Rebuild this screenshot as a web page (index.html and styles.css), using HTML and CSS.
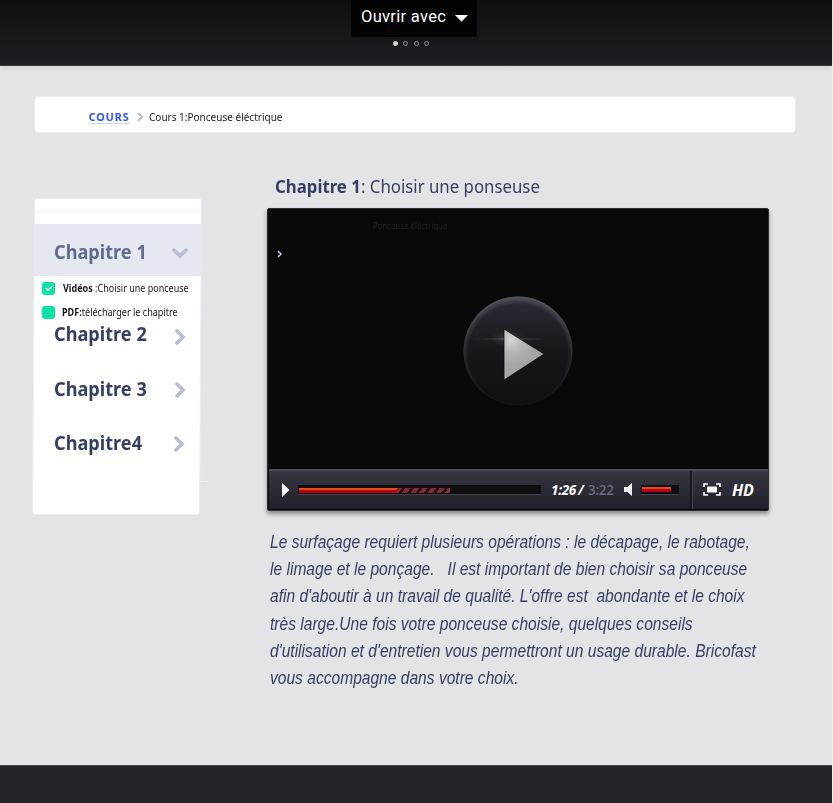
FILE: index.html
```html
<!DOCTYPE html>
<html lang="fr">
<head>
<meta charset="utf-8">
<title>Cours 1 : Ponceuse éléctrique</title>
<link rel="stylesheet" href="styles.css">
</head>
<body>
<div class="page">
  <header class="topbar">
    <button class="open-with"><span>Ouvrir avec</span><svg width="13" height="7" viewBox="0 0 13 7"><path d="M0 0h13L6.5 6.7z" fill="#fff"/></svg></button>
    <div class="dots"><i class="on"></i><i></i><i></i><i></i></div>
  </header>

  <nav class="breadcrumb">
    <a class="crumb-link">COURS</a>
    <svg class="crumb-sep" width="8" height="10" viewBox="0 0 8 10"><path d="M2 1l4 4-4 4" fill="none" stroke="#b4bcd4" stroke-width="2"/></svg>
    <span class="crumb-current">Cours 1:Ponceuse éléctrique</span>
  </nav>

  <main class="content">
    <aside class="sidebar">
      <div class="strip"></div>
      <div class="chapter active"><span class="name">Chapitre 1</span><svg width="16" height="11" viewBox="0 0 16 11"><path d="M2 2l6 6 6-6" /></svg></div>
      <ul class="lessons">
        <li><span class="box"><svg width="8" height="7" viewBox="0 0 8 7"><path d="M1 3.2l2.1 2.1L7 1.2" fill="none" stroke="#fff" stroke-width="1.5"/></svg></span><span class="lesson video"><b>Vidéos</b> :Choisir une ponceuse</span></li>
        <li><span class="box"></span><span class="lesson pdf"><b>PDF:</b>télécharger le chapitre</span></li>
      </ul>
      <div class="chapter c2"><span class="name">Chapitre 2</span><svg width="11" height="16" viewBox="0 0 11 16"><path d="M2 2l6 6-6 6"/></svg></div>
      <div class="chapter c3"><span class="name">Chapitre 3</span><svg width="11" height="16" viewBox="0 0 11 16"><path d="M2 2l6 6-6 6"/></svg></div>
      <div class="chapter c4"><span class="name">Chapitre4</span><svg width="11" height="16" viewBox="0 0 11 16"><path d="M2 2l6 6-6 6"/></svg></div>
      <div class="hair"></div>
    </aside>

    <section class="lesson-view">
      <h1><b>Chapitre 1</b><span>: Choisir une ponseuse</span></h1>
      <div class="player">
        <div class="screen">
          <span class="ghost">Ponceuse éléctrique</span>
          <svg class="mini" width="6" height="8" viewBox="0 0 6 8"><path d="M1 1l3 3-3 3" fill="none" stroke="#c8cce0" stroke-width="1.5"/></svg>
          <svg class="play" width="112" height="112" viewBox="0 0 112 112">
            <defs>
              <linearGradient id="disc" x1="0" y1="0" x2="0" y2="1"><stop offset="0" stop-color="#2c2d35"/><stop offset=".5" stop-color="#17171b"/><stop offset="1" stop-color="#101012"/></linearGradient>
              <radialGradient id="rim" cx=".5" cy=".53" r=".53"><stop offset=".86" stop-color="#62636c" stop-opacity="0"/><stop offset="1" stop-color="#686972" stop-opacity=".75"/></radialGradient>
              <linearGradient id="fade" x1="0" y1="0" x2="0" y2="1"><stop offset="0" stop-color="#fff"/><stop offset="1" stop-color="#888"/></linearGradient>
              <mask id="m"><rect width="112" height="112" fill="url(#fade)"/></mask>
              <radialGradient id="flare"><stop offset="0" stop-color="#fff" stop-opacity=".5"/><stop offset=".4" stop-color="#bbb" stop-opacity=".15"/><stop offset="1" stop-color="#999" stop-opacity="0"/></radialGradient>
              <radialGradient id="tri" gradientUnits="userSpaceOnUse" cx="49" cy="45" r="26"><stop offset="0" stop-color="#d4d4d4"/><stop offset=".5" stop-color="#b4b4b4"/><stop offset="1" stop-color="#a5a5a5"/></radialGradient>
            </defs>
            <circle cx="56" cy="56" r="54.5" fill="url(#disc)"/>
            <circle cx="56" cy="56" r="54.5" fill="url(#rim)" mask="url(#m)"/>
            <ellipse cx="48" cy="44" rx="42" ry="1.3" fill="url(#flare)"/>
            <ellipse cx="46" cy="44" rx="19" ry="8" fill="url(#flare)" opacity=".7"/>
            <path d="M42 34v51l40-26z" fill="url(#tri)" stroke="#101013" stroke-width=".8"/>
          </svg>
        </div>
        <div class="controls">
          <svg class="btn-play" width="9" height="14" viewBox="0 0 9 14"><path d="M1 0l7.5 7L1 14z" fill="#fff"/></svg>
          <div class="track"><div class="played"></div><div class="buffered"></div></div>
          <span class="time"><i>1:26&thinsp;/</i><em>3:22</em></span>
          <svg class="speaker" width="9" height="13" viewBox="0 0 9 13"><path d="M8 0v13L3.5 9H0V4h3.5z" fill="#f0f0f0"/></svg>
          <div class="volume"><div></div></div>
          <div class="extras">
            <svg width="18" height="13" viewBox="0 0 18 13"><path d="M1 4V1h4M13 1h4v3M17 9v3h-4M5 12H1V9" fill="none" stroke="#fff" stroke-width="1.6"/><rect x="4" y="3.5" width="10" height="6" rx="1" fill="#fff"/></svg>
            <span class="hd">HD</span>
          </div>
        </div>
      </div>
      <p class="intro">Le surfaçage requiert plusieurs opérations : le décapage, le rabotage,
le limage et le ponçage.   Il est important de bien choisir sa ponceuse
afin d'aboutir à un travail de qualité. L'offre est  abondante et le choix
très large.Une fois votre ponceuse choisie, quelques conseils
d'utilisation et d'entretien vous permettront un usage durable. Bricofast
vous accompagne dans votre choix.</p>
    </section>
  </main>
  <footer class="footer"></footer>
</div>
</body>
</html>
```

FILE: styles.css
```css
* { box-sizing: border-box; }
body { margin: 0; background: #f0f1f2; overflow: hidden; font-family: "Noto Sans", "Open Sans", sans-serif; color: #363f63; }
svg { display: block; flex: none; }
.page { width: 832px; height: 803px; background: #e3e4e6; display: flex; flex-direction: column; }

.topbar { height: 66px; flex: none; background: linear-gradient(#0e0f11, #1e1f24); border-bottom: 1px solid #393942; display: flex; flex-direction: column; align-items: center; box-shadow: 0 1px 5px rgba(50,40,60,.14); }
.open-with { width: 126px; height: 37px; margin: 0 4px 0 0; padding: 0 9px 4px 10px; border: 0; border-radius: 0 0 2px 2px; background: #030303; color: #fff; font: 16.5px Roboto, sans-serif; letter-spacing: .3px; display: flex; align-items: center; justify-content: space-between; white-space: nowrap; }
.open-with svg { margin-top: 4px; }
.dots { display: flex; gap: 5.5px; margin: 4px 10px 0 0; }
.dots i { width: 5px; height: 5px; border: 1px solid #85868a; border-radius: 50%; }
.dots .on { background: #d5d5d5; border-color: #d5d5d5; }

.breadcrumb { flex: none; width: 762px; height: 37px; margin: 30px 0 0 34px; padding: 4px 0 0 53.5px; border: 1px solid #ededee; border-radius: 4px; background: #fff; display: flex; align-items: center; white-space: nowrap; }
.crumb-link { width: 41px; margin-top: 1px; font-size: 11px; line-height: 13px; font-weight: 700; letter-spacing: .75px; color: #3559de; border-bottom: 1px solid #c9d3fa; }
.crumb-sep { margin: 1px 5.5px 0 6px; }
.crumb-current { font-size: 11px; color: #202126; transform: scaleX(.91); transform-origin: 0 50%; }

.content { display: flex; flex: none; height: 632px; }
.sidebar { position: relative; z-index: 0; width: 168px; height: 317px; margin: 65px 0 0 33px; }
.sidebar::before { content: ""; position: absolute; z-index: -1; inset: 0; background: #fff; border: 1px solid #ededee; border-radius: 4px; transform: skewX(-.35deg); }
.strip { height: 26px; background: linear-gradient(#f4f4f5, #f4f4f5) 0 13px / 100% 1px no-repeat; }
.chapter { display: flex; align-items: center; justify-content: space-between; padding: 0 15px 0 21px; height: 30px; white-space: nowrap; }
.chapter .name { font-size: 19px; line-height: 24px; margin-bottom: 2px; font-weight: 700; width: 93px; transform: scaleX(.955); transform-origin: 0 50%; }
.chapter path { fill: none; stroke: #b6bdd4; stroke-width: 3.6; stroke-linecap: round; }
.chapter.active { height: 52px; padding: 5px 13px 0 21px; background: #e6e8f1; color: #626b8e; }
.chapter.active svg { margin-top: 2px; }
.c2 svg { margin-top: 4px; }
.c3 { margin-top: 25px; }
.c4 { margin-top: 24px; }
.c4.chapter { padding-right: 16px; }
.lessons { list-style: none; margin: 0; padding: 0 0 0 9px; height: 44px; }
.lessons li { height: 24px; display: flex; align-items: center; white-space: nowrap; }
.box { flex: none; width: 13px; height: 13px; border-radius: 3px; background: #0ce1a6; display: flex; align-items: center; justify-content: center; }
.lesson { margin-left: 8px; font-size: 10px; line-height: 14px; color: #15161c; transform: scaleX(.9); transform-origin: 0 50%; }
.lesson.pdf { margin-left: 7px; transform: scaleX(.905); }
.hair { position: absolute; left: 167px; top: 283px; width: 8px; height: 1px; background: #ededee; }

.lesson-view { margin-left: 66px; width: 503px; padding-top: 40px; }
h1 { margin: 0 0 0 8px; height: 35px; font-size: 17.5px; line-height: 26px; font-weight: 400; white-space: nowrap; transform: scaleX(.96); transform-origin: 0 50%; }
.player { width: 502px; height: 303px; border: 1px solid #303034; border-radius: 2px; background: #090909; box-shadow: 0 3px 4px rgba(0,0,0,.4); }
.screen { position: relative; height: 260px; }
.ghost { position: absolute; left: 105px; top: 10px; font-size: 9px; line-height: 14px; color: #202023; transform: scaleX(.87); transform-origin: 0 50%; white-space: nowrap; }
.mini { position: absolute; left: 9px; top: 41px; }
.play { position: absolute; left: 194px; top: 86px; }
.controls { height: 40px; margin-left: 1px; background: linear-gradient(#35363f, #20212a); border-top: 2px solid #494a57; display: flex; align-items: center; padding: 0 0 1px 12px; white-space: nowrap; }
.btn-play { margin-right: 8px; }
.track { width: 243px; height: 10px; margin-top: 1px; border-top: 1px solid #08080a; border-bottom: 1px solid #41424d; background: #0e0e10; display: flex; align-items: center; padding-left: 1px; }
.played { width: 98px; height: 5px; background: linear-gradient(#df5011 0 2px, #b9001c 2px); }
.buffered { width: 53px; height: 5px; background: repeating-linear-gradient(125deg, #872b35 0 4px, #26191d 4px 7px); }
.time { display: flex; width: 73px; margin: 1px 0 0 10px; color: #fff; font: 700 13.5px "Noto Sans", sans-serif; letter-spacing: -.3px; }
.time i { width: 37px; }
.time em { color: #6d6d82; font-style: normal; font-weight: 500; }
.speaker { margin: 0 8px 0 0; }
.volume { width: 38px; height: 10px; margin-top: 1px; padding: 2px 0 0 1px; background: #101013; border-bottom: 1px solid #41424d; }
.volume div { width: 29px; height: 5px; background: linear-gradient(#df5011 0 2px, #b9001c 2px); }
.extras { align-self: stretch; margin: 0 0 -1px 11px; padding: 0 0 1px 11px; border-left: 2px solid #17181e; box-shadow: inset 1px 0 #444550; display: flex; align-items: center; gap: 11px; }
.hd { font: italic 700 16px "Noto Sans", sans-serif; color: #fff; letter-spacing: -.3px; }
.intro { width: 600px; margin: 16.6px 0 0 3px; font: italic 19px/27.35px "Liberation Sans", Arial, sans-serif; white-space: pre; transform: scaleX(.82); transform-origin: 0 0; }
.footer { height: 39px; flex: none; background: #222328; border-top: 1px solid #454850; }
```
